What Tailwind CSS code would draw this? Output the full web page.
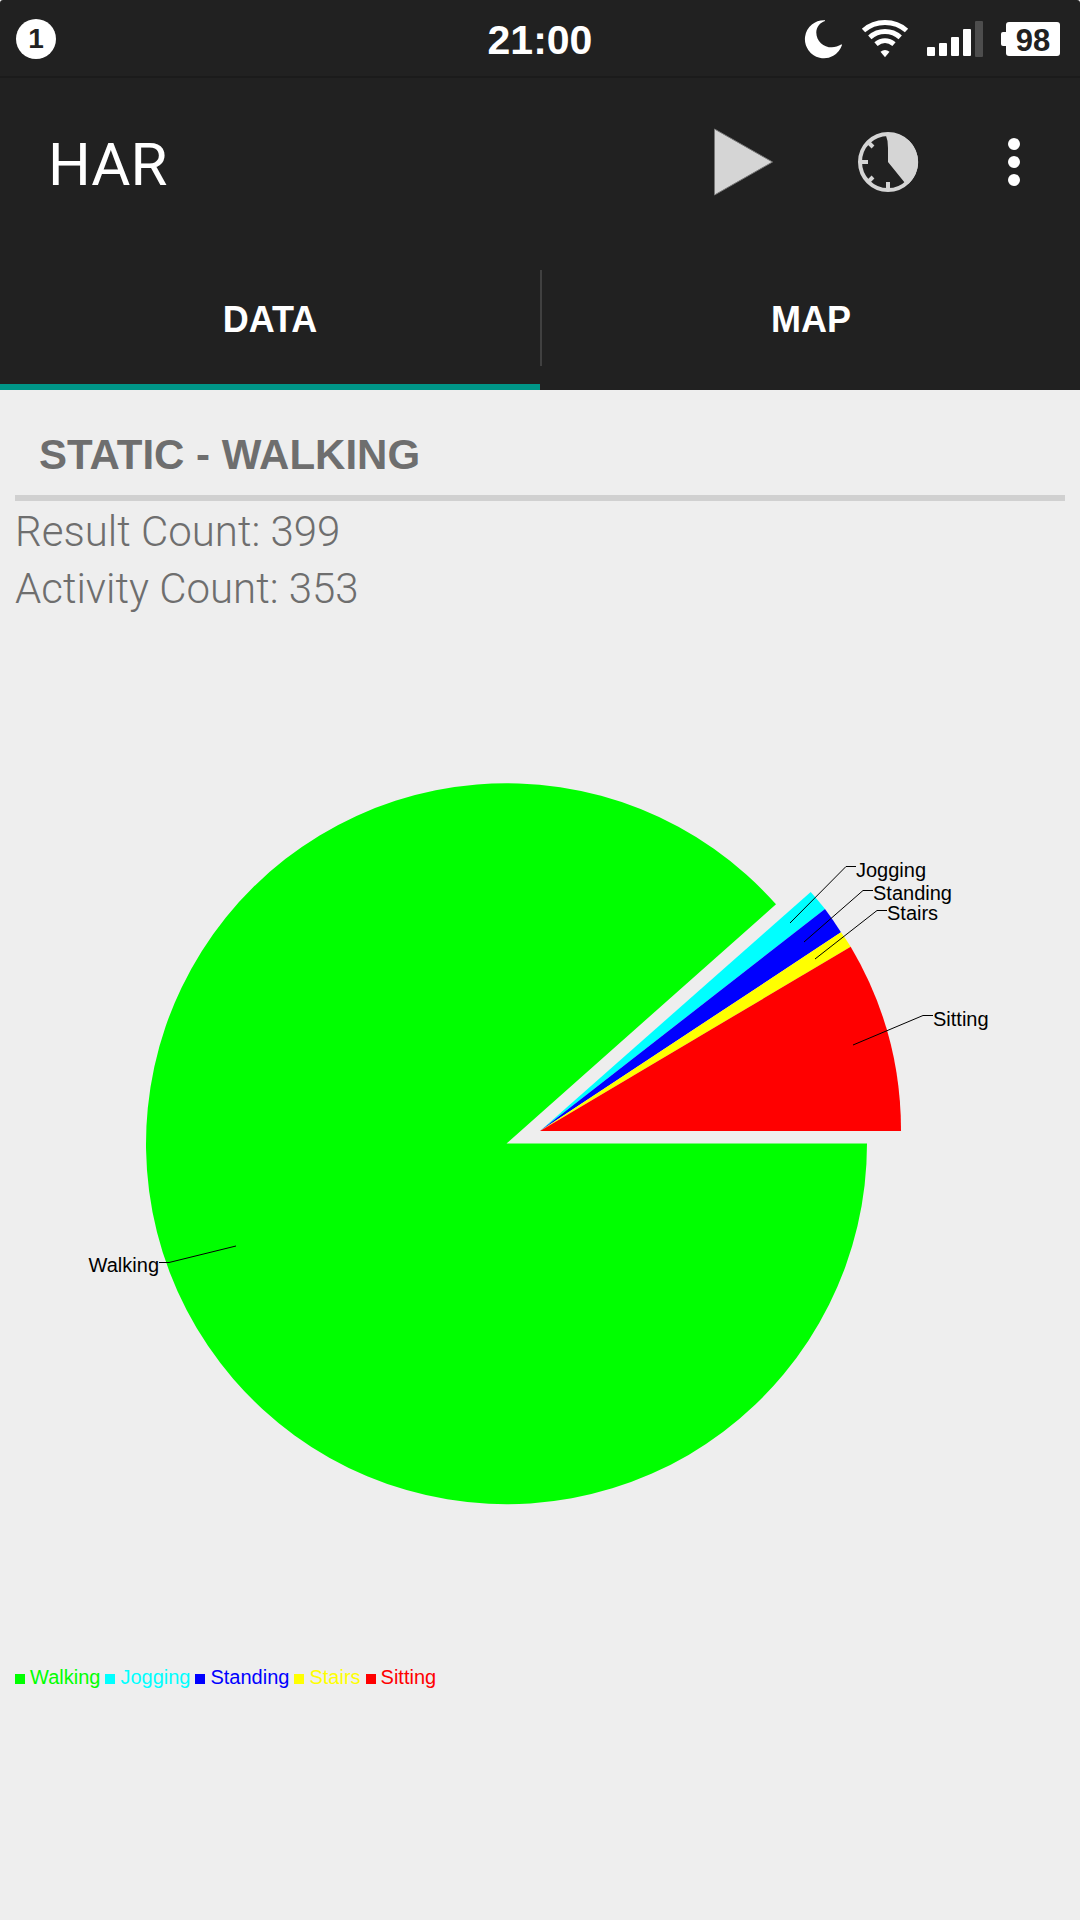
<!DOCTYPE html>
<html lang="en">
<head>
<meta charset="utf-8">
<meta name="viewport" content="width=device-width, initial-scale=1">
<title>HAR</title>
<script src="https://cdn.jsdelivr.net/npm/@tailwindcss/browser@4"></script>
</head>
<body class="min-h-screen bg-[#eeeeee] font-['Liberation_Sans',sans-serif] text-[#6e6e6e]">
<div class="bg-white">
<header class="rounded-t-[3px] bg-[#212121] text-white">
  <!-- Status bar -->
  <div class="grid h-[78px] grid-cols-3 items-center border-b-2 border-[#1b1b1b] pt-[2px] pr-5 pl-4">
    <div class="flex size-10 items-center justify-center rounded-full bg-white text-[28px] leading-none font-bold text-[#212121]">1</div>
    <time class="pt-[2px] pl-1 text-center text-[41px] leading-none font-bold">21:00</time>
    <div class="flex items-center justify-end gap-[18px]">
      <svg class="h-10 w-[40px]" viewBox="0 0 40 40" fill="#fff" role="img" aria-label="Do not disturb"><path d="M22 1.200A19 19 0 1 0 39 26L38.500 25.300C27 33 13 25 13.300 13C13.500 8 17 3.500 22 2Z"/></svg>
      <svg class="h-10 w-[48px]" viewBox="0 0 48 40" fill="none" stroke="#fff" stroke-width="5" role="img" aria-label="Wi-Fi"><path d="M2.500 11.500C14.500 .800 33.500 .800 45.500 11.500M8.800 18.300C17.500 10.600 30.500 10.600 39.200 18.300M15 25.200C20.500 20.500 27.500 20.500 33 25.200"/><path d="M19.500 32.800Q24 29.300 28.500 32.800L24 38.200Z" fill="#fff" stroke="none"/></svg>
      <svg class="h-10 w-[56px]" viewBox="0 0 56 40" fill="#fff" role="img" aria-label="Signal"><rect y="28" width="8" height="9" rx="1"/><rect x="12" y="24" width="8" height="13" rx="1"/><rect x="24" y="18" width="8" height="19" rx="1"/><rect x="36" y="10" width="8" height="27" rx="1"/><rect x="48" y="2" width="8" height="36" rx="1" fill="#4d4d4d"/></svg>
      <div class="flex items-center">
        <span class="h-[14px] w-[5px] rounded-l-xs bg-white"></span>
        <span class="flex h-[34px] w-[54px] items-center justify-center rounded-[3px] bg-white pt-[2px] text-[31px] leading-none font-bold text-[#212121]">98</span>
      </div>
    </div>
  </div>
  <!-- Action bar -->
  <div class="flex h-[168px] items-center pl-12">
    <h1 class="flex-1 pt-[6px] font-[Roboto,sans-serif] text-[60px] leading-none">HAR</h1>
    <button type="button" aria-label="Start" class="flex h-full w-36 items-center justify-center">
      <svg class="size-[72px]" viewBox="0 0 72 72"><path d="M6.500 3L64.500 36L6.500 69Z" fill="#d5d5d5" stroke="#777" stroke-width="1"/></svg>
    </button>
    <button type="button" aria-label="Schedule" class="flex h-full w-36 items-center justify-center">
      <svg class="size-[64px]" viewBox="0 0 64 64"><circle cx="32" cy="32" r="28" fill="none" stroke="#d5d5d5" stroke-width="4"/><path d="M29.500 4Q32 10 32 18V32L49 53L52 54A29 29 0 0 0 32 3Z" fill="#d5d5d5"/><path d="M5 32H12M32 59V52M12.500 12.500L17 17M12.500 51.500L17 47" stroke="#d5d5d5" stroke-width="4"/></svg>
    </button>
    <button type="button" aria-label="More options" class="flex h-full w-[120px] items-center justify-center pr-3">
      <svg class="h-[48px] w-[12px]" viewBox="0 0 12 48" fill="#fff"><circle cx="6" cy="6" r="6"/><circle cx="6" cy="24" r="6"/><circle cx="6" cy="42" r="6"/></svg>
    </button>
  </div>
  <!-- Tabs -->
  <nav class="grid h-36 grid-cols-2 text-[36px] leading-none font-bold">
    <a href="#data" aria-current="page" class="flex items-center justify-center border-b-6 border-[#009688] pt-[10px]">DATA</a>
    <a href="#map" class="flex items-center">
      <span class="h-24 w-[2px] bg-[#404040]"></span>
      <span class="flex-1 pt-1 text-center">MAP</span>
    </a>
  </nav>
</header>
</div>
<main id="data">
  <section class="px-[15px]">
    <h2 class="border-b-6 border-[#d0d0d0] px-6 pt-11 pb-[19px] text-[42px] leading-[42px] font-bold">STATIC - WALKING</h2>
    <p class="pt-[2px] font-[Roboto,sans-serif] text-[42px] leading-[57px] font-light">Result Count: 399<br>Activity Count: 353</p>
  </section>
  <svg class="block w-full" viewBox="0 617 1080 1043" role="img" aria-label="Activity pie chart">
    <path fill="#00ff00" d="M506.500 1143.500H867A360.500 360.500 0 1 1 776 904.300Z"/>
    <path fill="#00ffff" d="M540 1131L810.700 892A361 361 0 0 1 825 909Z"/>
    <path fill="#0000ff" d="M540 1131L825 909A361 361 0 0 1 841 932.300Z"/>
    <path fill="#ffff00" d="M540 1131L841 932.300A361 361 0 0 1 850.700 946.700Z"/>
    <path fill="#ff0000" d="M540 1131L850.700 946.700A361 361 0 0 1 901 1131Z"/>
    <path fill="none" stroke="#000" stroke-width="1" d="M790 923L846 866.500H856M804 942L863 890.500H873M815 959L877 910.500H887M853 1045L923 1015.500H933M236 1246L169 1262.500H159"/>
    <g fill="#000" font-size="20">
      <text x="856" y="877">Jogging</text>
      <text x="873" y="900">Standing</text>
      <text x="887" y="920">Stairs</text>
      <text x="933" y="1026">Sitting</text>
      <text x="159" y="1272" text-anchor="end">Walking</text>
    </g>
  </svg>
  <ul class="flex flex-wrap gap-x-[5px] px-[15px] pt-[5px] pb-10 text-[20px] leading-6">
    <li class="flex items-center gap-[5px] text-[#00ff00]"><span class="mt-[3px] size-[10px] bg-current"></span>Walking</li>
    <li class="flex items-center gap-[5px] text-[#00ffff]"><span class="mt-[3px] size-[10px] bg-current"></span>Jogging</li>
    <li class="flex items-center gap-[5px] text-[#0000ff]"><span class="mt-[3px] size-[10px] bg-current"></span>Standing</li>
    <li class="flex items-center gap-[5px] text-[#ffff00]"><span class="mt-[3px] size-[10px] bg-current"></span>Stairs</li>
    <li class="flex items-center gap-[5px] text-[#ff0000]"><span class="mt-[3px] size-[10px] bg-current"></span>Sitting</li>
  </ul>
</main>
</body>
</html>
